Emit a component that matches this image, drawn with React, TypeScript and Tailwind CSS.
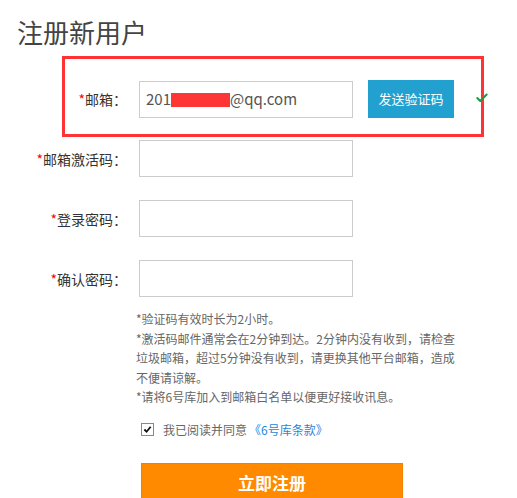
import { Check } from 'lucide-react';

const font = { fontFamily: '"Noto Sans CJK SC", "Liberation Sans", sans-serif' };

function Field({ label }: { label: string }) {
  return (
    <div className="flex items-center">
      <label className="w-[127px] shrink-0 text-right text-[14px] leading-[20px] text-[#333]">
        <span className="text-[#f00]">*</span>
        {label}：
      </label>
      <input
        type="text"
        className="ml-[12px] h-[37px] w-[214px] shrink-0 border border-[#ccc] bg-white px-[6px] outline-none"
      />
    </div>
  );
}

export default function App() {
  return (
    <div className="h-[498px] w-[517px] overflow-hidden bg-white" style={font}>
      {/* Title */}
      <h1 className="pl-[17px] pt-[19px] text-[26px] font-normal leading-[26px] text-[#444]">注册新用户</h1>

      {/* Highlighted email row */}
      <div className="ml-[62px] mt-[11px] h-[81px] w-[422px] border-[3px] border-[#f33] pt-[21px]">
        <div className="flex items-center">
          <label className="w-[62px] shrink-0 text-right text-[14px] leading-[20px] text-[#333]">
            <span className="text-[#f00]">*</span>
            邮箱：
          </label>
          <div className="ml-[12px] flex h-[37px] w-[214px] shrink-0 items-center border border-[#ccc] bg-white pl-[6px] text-[15px] text-[#555]">
            <span>201</span>
            <span className="mt-[1px] h-[14px] w-[59px] bg-[#fd3535]" />
            <span>@qq.com</span>
          </div>
          <button className="ml-[15px] h-[38px] w-[86px] shrink-0 bg-[#22a1d1] text-[13px] text-white">
            发送验证码
          </button>
          <Check className="ml-[21px] mt-[-2px] h-[14px] w-[14px] shrink-0 text-[#14a03c]" strokeWidth={3.5} />
        </div>
      </div>

      {/* Other fields */}
      <div className="mt-[3px] flex flex-col gap-[23px]">
        <Field label="邮箱激活码" />
        <Field label="登录密码" />
        <Field label="确认密码" />
      </div>

      {/* Notes */}
      <div className="ml-[136px] mt-[12px] w-[324px] text-[12px] leading-[19.5px] text-[#666]">
        <p>*验证码有效时长为2小时。</p>
        <p>*激活码邮件通常会在2分钟到达。2分钟内没有收到，请检查垃圾邮箱，超过5分钟没有收到，请更换其他平台邮箱，造成不便请谅解。</p>
        <p>*请将6号库加入到邮箱白名单以便更好接收讯息。</p>
      </div>

      {/* Agreement */}
      <div className="ml-[141px] mt-[16px] flex items-center text-[12px] leading-[14px]">
        <span className="flex h-[13px] w-[13px] items-center justify-center border border-[#888] bg-white">
          <svg viewBox="0 0 10 10" className="h-[9px] w-[9px]">
            <path d="M1.5 5 L4 7.5 L8.5 2" fill="none" stroke="#111" strokeWidth="2" />
          </svg>
        </span>
        <span className="ml-[9px] text-[#666]">我已阅读并同意</span>
        <a href="#" className="ml-[2px] text-[#2a86d8]">《6号库条款》</a>
      </div>

      {/* Submit */}
      <button className="ml-[141px] mt-[26px] h-[40px] w-[262px] border border-[#f08000] bg-[#ff8a00] text-[17px] font-bold text-white">
        立即注册
      </button>
    </div>
  );
}
